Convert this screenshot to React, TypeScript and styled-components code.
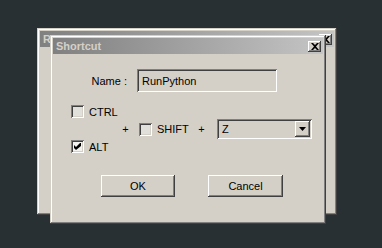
import styled, { createGlobalStyle } from 'styled-components'

const GlobalStyle = createGlobalStyle`
  html, body {
    margin: 0;
    padding: 0;
    background: #283033;
  }
  body {
    font-family: 'Liberation Sans', Arial, sans-serif;
    font-size: 11px;
    color: #000;
  }
`

const Desktop = styled.div`
  position: relative;
  width: 382px;
  height: 248px;
  background: #283033;
  overflow: hidden;
`

const Window = styled.div<{ $x: number; $y: number; $w: number; $h: number }>`
  position: absolute;
  left: ${({ $x }) => $x}px;
  top: ${({ $y }) => $y}px;
  width: ${({ $w }) => $w}px;
  height: ${({ $h }) => $h}px;
  box-sizing: border-box;
  padding: 3px;
  display: flex;
  flex-direction: column;
  background: #d4d0c8;
  box-shadow: inset -1px -1px #404040, inset 1px 1px #d4d0c8,
    inset -2px -2px #808080, inset 2px 2px #ffffff;
`

const TitleBar = styled.div`
  height: 16px;
  flex: none;
  display: flex;
  align-items: center;
  padding: 0 2px 0 3px;
  background: linear-gradient(to right, #808080, #c4c4c4);
  color: #d4d0c8;
  font-weight: bold;
  font-size: 11px;
`

const TitleText = styled.span`
  flex: 1;
  white-space: nowrap;
  overflow: hidden;
`

const CloseButton = styled.div`
  width: 13px;
  height: 11px;
  display: flex;
  align-items: center;
  justify-content: center;
  background: #d4d0c8;
  box-shadow: inset -1px -1px #404040, inset 1px 1px #ffffff,
    inset -2px -2px #808080;
`

const Body = styled.div`
  flex: 1;
  display: flex;
  flex-direction: column;
  padding-top: 15px;
`

const NameRow = styled.div`
  display: flex;
  align-items: center;
  padding-left: 30px;
  height: 23px;
`

const NameLabel = styled.span`
  width: 44px;
  text-align: right;
  margin-right: 10px;
`

const Sunken = styled.div<{ $w: number; $h: number }>`
  width: ${({ $w }) => $w}px;
  height: ${({ $h }) => $h}px;
  box-sizing: border-box;
  background: #d4d0c8;
  box-shadow: inset 1px 1px #808080, inset -1px -1px #ffffff,
    inset 2px 2px #404040, inset -2px -2px #d4d0c8;
  display: flex;
  align-items: center;
  padding: 0 2px 0 5px;
`

const ModRow = styled.div`
  display: flex;
  align-items: center;
  padding-left: 18px;
  margin-top: 13px;
`

const ModColumn = styled.div`
  width: 51px;
  display: flex;
  flex-direction: column;
  gap: 22px;
`

const Check = styled.label`
  display: flex;
  align-items: center;
  gap: 5px;
  height: 13px;
`

const Box = styled.span<{ $checked?: boolean }>`
  width: 13px;
  height: 13px;
  flex: none;
  box-sizing: border-box;
  display: flex;
  align-items: center;
  justify-content: center;
  background: ${({ $checked }) => ($checked ? '#f4f3f0' : '#e2e0da')};
  box-shadow: inset 1px 1px #808080, inset -1px -1px #ffffff,
    inset 2px 2px #404040, inset -2px -2px #d4d0c8;
`

const Plus = styled.span<{ $mr: number }>`
  width: 7px;
  text-align: center;
  margin-right: ${({ $mr }) => $mr}px;
`

const ShiftLabel = styled.span`
  width: 41px;
`

const DropButton = styled.div`
  margin-left: auto;
  width: 15px;
  height: 16px;
  display: flex;
  align-items: center;
  justify-content: center;
  background: #d4d0c8;
  box-shadow: inset -1px -1px #404040, inset 1px 1px #ffffff,
    inset -2px -2px #808080;
`

const ButtonRow = styled.div`
  display: flex;
  gap: 33px;
  padding-left: 48px;
  margin-top: 22px;
`

const Button = styled.div<{ $w: number }>`
  width: ${({ $w }) => $w}px;
  height: 22px;
  display: flex;
  align-items: center;
  justify-content: center;
  background: #d4d0c8;
  box-shadow: inset -1px -1px #404040, inset 1px 1px #ffffff,
    inset -2px -2px #808080;
`

const CloseGlyph = () => (
  <svg width="8" height="7" viewBox="0 0 8 7">
    <path d="M0 0h2l2 2 2-2h2L5 3.5 8 7H6L4 5 2 7H0l3-3.5z" fill="#000" />
  </svg>
)

const CheckGlyph = () => (
  <svg width="7" height="7" viewBox="0 0 7 7">
    <polygon points="0,2 2,4 6,0 7,0 7,3 2,7 0,5" fill="#000" />
  </svg>
)

const Arrow = () => (
  <svg width="7" height="4" viewBox="0 0 7 4">
    <polygon points="0,0 7,0 3.5,4" fill="#000" />
  </svg>
)

export default function App() {
  return (
    <Desktop>
      <GlobalStyle />
      <Window $x={37} $y={28} $w={300} $h={187}>
        <TitleBar>
          <TitleText>R</TitleText>
          <CloseButton>
            <CloseGlyph />
          </CloseButton>
        </TitleBar>
      </Window>
      <Window $x={50} $y={35} $w={276} $h={189}>
        <TitleBar>
          <TitleText>Shortcut</TitleText>
          <CloseButton>
            <CloseGlyph />
          </CloseButton>
        </TitleBar>
        <Body>
          <NameRow>
            <NameLabel>Name :</NameLabel>
            <Sunken $w={140} $h={23}>RunPython</Sunken>
          </NameRow>
          <ModRow>
            <ModColumn>
              <Check>
                <Box />
                CTRL
              </Check>
              <Check>
                <Box $checked>
                  <CheckGlyph />
                </Box>
                ALT
              </Check>
            </ModColumn>
            <Plus $mr={10}>+</Plus>
            <Check>
              <Box />
              <ShiftLabel>SHIFT</ShiftLabel>
            </Check>
            <Plus $mr={12}>+</Plus>
            <Sunken $w={95} $h={20}>
              Z
              <DropButton>
                <Arrow />
              </DropButton>
            </Sunken>
          </ModRow>
          <ButtonRow>
            <Button $w={74}>OK</Button>
            <Button $w={75}>Cancel</Button>
          </ButtonRow>
        </Body>
      </Window>
    </Desktop>
  )
}
